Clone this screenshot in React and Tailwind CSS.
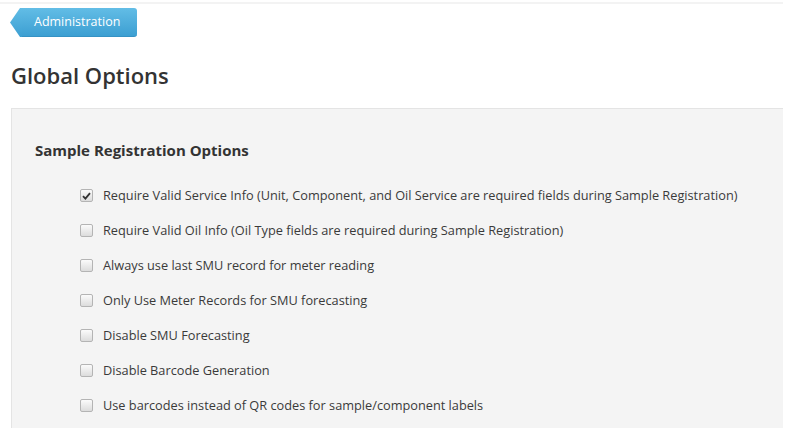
const options = [
  { label: "Require Valid Service Info (Unit, Component, and Oil Service are required fields during Sample Registration)", checked: true },
  { label: "Require Valid Oil Info (Oil Type fields are required during Sample Registration)", checked: false },
  { label: "Always use last SMU record for meter reading", checked: false },
  { label: "Only Use Meter Records for SMU forecasting", checked: false },
  { label: "Disable SMU Forecasting", checked: false },
  { label: "Disable Barcode Generation", checked: false },
  { label: "Use barcodes instead of QR codes for sample/component labels", checked: false },
];

const Checkbox = ({ checked }) => (
  <span className="w-[13px] h-[13px] shrink-0 rounded-[2px] border border-[#b4b4b4] bg-gradient-to-b from-[#fbfbfb] to-[#dcdcdc] flex items-center justify-center">
    {checked && (
      <svg width="9" height="8" viewBox="0 0 9 8">
        <path d="M1 4.2 L3.4 6.6 L8 1.2" fill="none" stroke="#333" strokeWidth="1.8" />
      </svg>
    )}
  </span>
);

const App = () => {
  return (
    <div className="w-[794px] h-[438px] bg-white overflow-hidden font-['Open_Sans',sans-serif] text-[#333]">
      <div className="h-[2px] mt-[2px] w-[783px] bg-[#f3f3f3]" />
      <div className="pl-[10px] pt-[4px] flex">
        <div className="flex h-[29px]">
          <svg width="12" height="29" viewBox="0 0 12 29" className="shrink-0">
            <defs>
              <linearGradient id="bg" x1="0" y1="0" x2="0" y2="1">
                <stop offset="0" stopColor="#62bde6" />
                <stop offset="1" stopColor="#3c9fd2" />
              </linearGradient>
            </defs>
            <path d="M12 0 L10 0 L0 14.5 L10 29 L12 29 Z" fill="url(#bg)" />
          </svg>
          <div className="h-[29px] pl-[12px] pr-[17px] flex items-center rounded-r-[3px] bg-gradient-to-b from-[#62bde6] to-[#3c9fd2] text-white text-[12.5px] border-b border-[#3592c4]">
            Administration
          </div>
        </div>
      </div>
      <h1 className="ml-[11px] mt-[23px] text-[22px] font-semibold leading-[30px] text-[#333]">Global Options</h1>
      <div className="ml-[11px] mt-[18px] w-[772px] h-[320px] bg-[#f4f4f4] border-t border-l border-[#e4e4e4] pl-[23px] pt-[30px]">
        <h2 className="text-[15px] font-bold leading-[22px] text-[#333]">Sample Registration Options</h2>
        <div className="mt-[24px] pl-[45px] flex flex-col gap-[14px]">
          {options.map((o) => (
            <label key={o.label} className="flex items-center gap-[10px] h-[21px] text-[12.75px] text-[#3a3a3a]">
              <Checkbox checked={o.checked} />
              <span>{o.label}</span>
            </label>
          ))}
        </div>
      </div>
    </div>
  );
};

export default App;
